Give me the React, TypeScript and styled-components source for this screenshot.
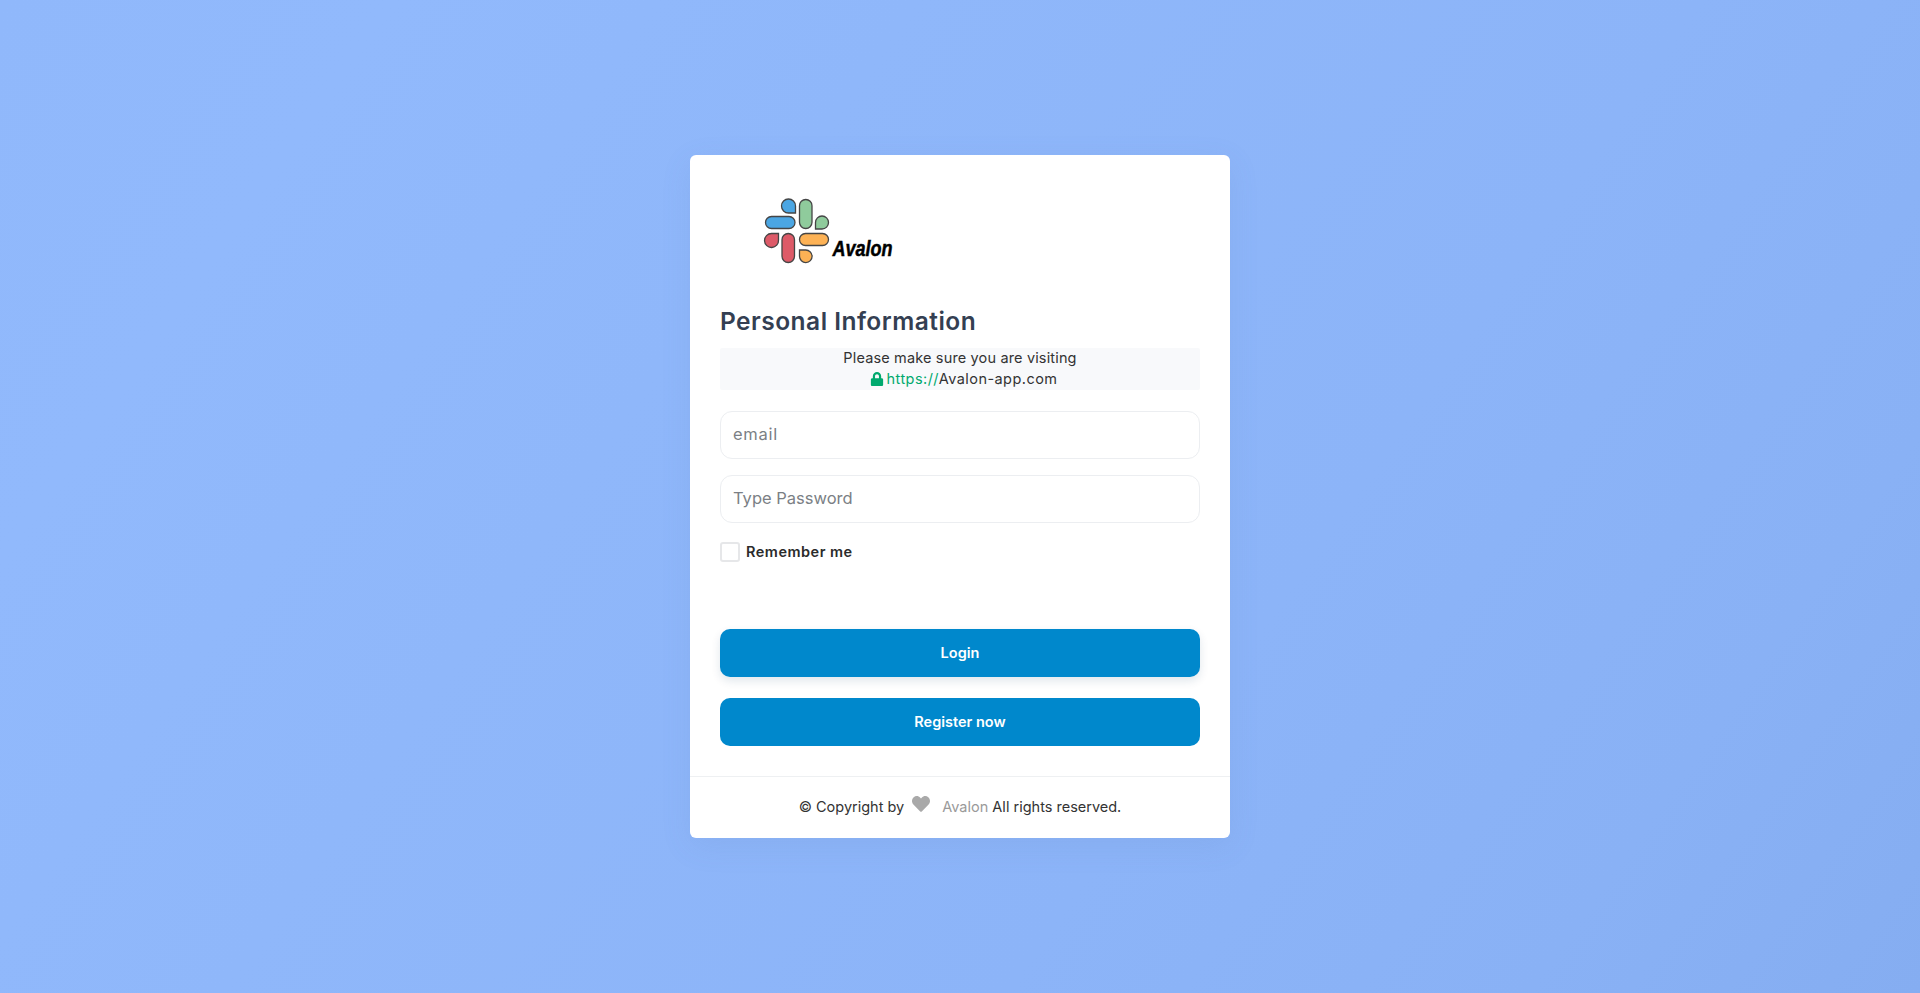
import React from "react";
import styled, { createGlobalStyle } from "styled-components";
import { FaHeart, FaLock } from "react-icons/fa";

const Global = createGlobalStyle`
  * { box-sizing: border-box; }
  html, body { margin: 0; padding: 0; }
  body { font-family: Inter, "Open Sans", sans-serif; }
`;

const Page = styled.main`
  min-height: 100vh;
  display: flex;
  align-items: center;
  justify-content: center;
  background: linear-gradient(125deg, #90b8fb 0%, #91b9fc 15%, #8fb7fa 35%, #8cb4f8 65%, #89b1f5 85%, #85adf1 100%);
`;

const Card = styled.section`
  width: 540px;
  height: 683px;
  background: #fff;
  border-radius: 6px;
  box-shadow: 0 8px 30px rgba(90, 120, 180, 0.12);
  display: flex;
  flex-direction: column;
`;

const Body = styled.div`
  flex: 1;
  padding: 40px 30px 0;
  display: flex;
  flex-direction: column;
`;

const Logo = styled.svg`
  display: block;
  width: 146px;
  height: 70px;
  margin-left: 40px;
  flex: none;
`;

const Heading = styled.h2`
  margin: 38px 0 9px;
  height: 36px;
  font-size: 24.5px;
  line-height: 36px;
  font-weight: 600;
  color: #343f52;
  letter-spacing: 0.48px;
`;

const Notice = styled.div`
  height: 42px;
  padding-bottom: 2px;
  background: #f8f9fb;
  border-radius: 2px;
  display: flex;
  flex-direction: column;
  justify-content: center;
  text-align: center;
  font-size: 14.5px;
  line-height: 21px;
  color: #333;
  letter-spacing: 0.15px;
`;

const Address = styled.div`
  padding-left: 7px;
  letter-spacing: 0.45px;
`;

const Secure = styled.span`
  color: #00a96e;
  svg { font-size: 14px; vertical-align: -1.5px; margin-right: 3px; }
`;

const Fields = styled.div`
  margin-top: 21px;
  display: flex;
  flex-direction: column;
  gap: 16px;
`;

const Input = styled.input<{ $spread?: number }>`
  width: 100%;
  height: 48px;
  padding: 0 12px 2px;
  border: 1px solid #eceef1;
  border-radius: 12px;
  background: #fff;
  font: 400 16.5px Inter, sans-serif;
  letter-spacing: ${(p) => p.$spread ?? 0}px;
  color: #333;
  outline: none;
  &::placeholder { color: #7b7f85; opacity: 1; }
`;

const Remember = styled.label`
  margin-top: 17px;
  height: 24px;
  padding-bottom: 1px;
  display: flex;
  align-items: center;
  gap: 6px;
  font-size: 14.5px;
  font-weight: 600;
  color: #2b2b2b;
  letter-spacing: 0.5px;
`;

const Box = styled.span`
  width: 20px;
  height: 20px;
  margin-top: 1px;
  border: 2px solid #e6e7e9;
  border-radius: 3px;
  background: #fff;
`;

const Actions = styled.div`
  margin-top: 65px;
  display: flex;
  flex-direction: column;
  gap: 21px;
`;

const Button = styled.button<{ $raised?: boolean }>`
  height: 48px;
  padding: 0 0 2px;
  border: 0;
  border-radius: 10px;
  background: #0088cc;
  color: #fff;
  font: 600 14.5px Inter, sans-serif;
  box-shadow: ${(p) => (p.$raised ? "0 4px 10px rgba(0, 60, 100, 0.12)" : "none")};
`;

const Footer = styled.footer`
  height: 62px;
  flex: none;
  padding-bottom: 2px;
  border-top: 1px solid #eef0f2;
  display: flex;
  align-items: center;
  justify-content: center;
  font-size: 14.5px;
  color: #333;
  white-space: pre;
`;

const Heart = styled(FaHeart)`
  color: #a9a9a9;
  font-size: 18px;
  margin: -5px 12px 0 8px;
`;

const Brand = styled.span`
  color: #9a9a9a;
`;

const LOGO = {
  stroke: "#454545",
  blue: "#4ba6e3",
  green: "#8fcb9c",
  red: "#dd5a68",
  orange: "#fdb255",
};

const Mark = () => (
  <Logo viewBox="0 0 146 70">
    <g stroke={LOGO.stroke} strokeWidth="1.3">
      <path d="M35.5 17.5 V11 A7 7 0 1 0 28.5 18 H35.5 Z" fill={LOGO.blue} />
      <rect x="5.5" y="21.5" width="29.5" height="12" rx="6" fill={LOGO.blue} />
      <rect x="39.5" y="4.5" width="12.5" height="29" rx="6.25" fill={LOGO.green} />
      <path d="M55.5 34 V27.5 A6.5 6.5 0 1 1 62 34 Z" fill={LOGO.green} />
      <path d="M18.5 38.5 V45 A7 7 0 1 1 11.5 38.5 Z" fill={LOGO.red} />
      <rect x="22" y="38.5" width="12.5" height="29" rx="6.25" fill={LOGO.red} />
      <rect x="39.5" y="38.5" width="29" height="12" rx="6" fill={LOGO.orange} />
      <path d="M39.5 55 H45.5 A6.3 6.3 0 1 1 39.5 61.3 Z" fill={LOGO.orange} />
    </g>
    <text
      x="72.5"
      y="61"
      fontFamily="Liberation Sans, sans-serif"
      fontWeight="700"
      fontStyle="italic"
      fontSize="21.5"
      textLength="60"
      lengthAdjust="spacingAndGlyphs"
      fill="#000"
      stroke="#000"
      strokeWidth="0.5"
    >
      Avalon
    </text>
  </Logo>
);

export default function App() {
  return (
    <Page>
      <Global />
      <Card>
        <Body>
          <Mark />
          <Heading>Personal Information</Heading>
          <Notice>
            <div>Please make sure you are visiting</div>
            <Address>
              <Secure>
                <FaLock />
                https://
              </Secure>
              Avalon-app.com
            </Address>
          </Notice>
          <Fields>
            <Input placeholder="email" $spread={0.7} />
            <Input placeholder="Type Password" type="password" />
          </Fields>
          <Remember>
            <Box />
            Remember me
          </Remember>
          <Actions>
            <Button $raised>Login</Button>
            <Button>Register now</Button>
          </Actions>
        </Body>
        <Footer>
          © Copyright by
          <Heart />
          <Brand>Avalon</Brand> All rights reserved.
        </Footer>
      </Card>
    </Page>
  );
}
